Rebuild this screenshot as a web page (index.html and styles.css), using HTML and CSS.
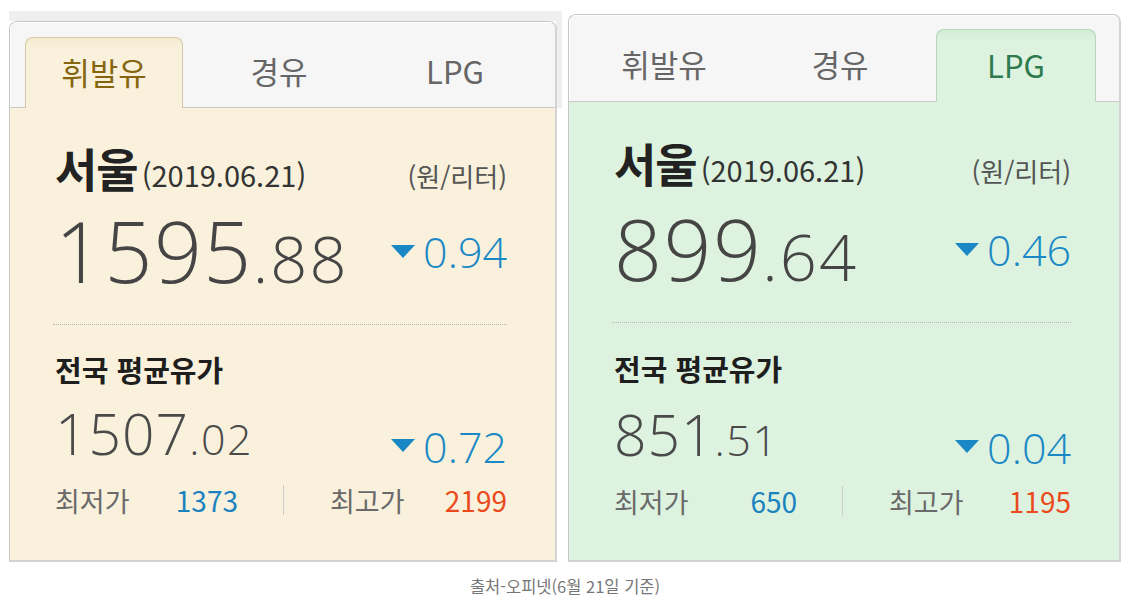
FILE: index.html
```html
<!DOCTYPE html>
<html lang="ko">
<head>
<meta charset="utf-8">
<title>유가 정보</title>
<link rel="stylesheet" href="styles.css">
</head>
<body>
<div class="page">
  <div class="shots">
    <div class="shot shot-gas">
      <div class="panel panel-gas">
        <div class="tabs">
          <div class="tab active">휘발유</div>
          <div class="tab">경유</div>
          <div class="tab">LPG</div>
        </div>
        <div class="content">
          <div class="head">
            <span class="city">서울</span><span class="date">(2019.06.21)</span>
            <span class="unit">(원/리터)</span>
          </div>
          <div class="main-row">
            <span class="price"><span class="int">1595</span><span class="dec">.88</span></span>
            <span class="change"><span class="tri"></span>0.94</span>
          </div>
          <div class="divider"></div>
          <div class="sub-title">전국 평균유가</div>
          <div class="avg-row">
            <span class="price"><span class="int">1507</span><span class="dec">.02</span></span>
            <span class="change"><span class="tri"></span>0.72</span>
          </div>
          <div class="range">
            <div class="half"><span class="lbl">최저가</span><span class="low">1373</span></div>
            <span class="sep"></span>
            <div class="half half-hi"><span class="lbl">최고가</span><span class="high">2199</span></div>
          </div>
        </div>
      </div>
    </div>
    <div class="shot shot-lpg">
      <div class="panel panel-lpg">
        <div class="tabs">
          <div class="tab">휘발유</div>
          <div class="tab">경유</div>
          <div class="tab active">LPG</div>
        </div>
        <div class="content">
          <div class="head">
            <span class="city">서울</span><span class="date">(2019.06.21)</span>
            <span class="unit">(원/리터)</span>
          </div>
          <div class="main-row">
            <span class="price"><span class="int">899</span><span class="dec">.64</span></span>
            <span class="change"><span class="tri"></span>0.46</span>
          </div>
          <div class="divider"></div>
          <div class="sub-title">전국 평균유가</div>
          <div class="avg-row">
            <span class="price"><span class="int">851</span><span class="dec">.51</span></span>
            <span class="change"><span class="tri"></span>0.04</span>
          </div>
          <div class="range">
            <div class="half"><span class="lbl">최저가</span><span class="low">650</span></div>
            <span class="sep"></span>
            <div class="half half-hi"><span class="lbl">최고가</span><span class="high">1195</span></div>
          </div>
        </div>
      </div>
    </div>
  </div>
  <p class="caption">출처-오피넷(6월 21일 기준)</p>
</div>
</body>
</html>
```

FILE: styles.css
```css
* { box-sizing: border-box; }

body {
  margin: 0;
  background: #fff;
  font-family: "Noto Sans CJK KR", "Noto Sans", sans-serif;
  color: #444;
}

.page {
  padding-top: 11px;
}

.shots {
  display: flex;
  align-items: flex-start;
  gap: 6px;
  padding-left: 9px;
}

.shot-gas {
  width: 553px;
  height: 551px;
  padding-top: 10px;
  background:
    linear-gradient(#efefef, #efefef) top left / 100% 10px no-repeat,
    linear-gradient(#efefef, #efefef) top right / 6px 97px no-repeat;
}

.shot-lpg {
  width: 553px;
  height: 548px;
  margin-top: 3px;
}

.panel {
  display: flex;
  flex-direction: column;
  border: 1px solid #c6c6c6;
  border-right: 2px solid #d3d3d3;
  border-bottom: 2px solid #d3d3d3;
  border-radius: 8px 8px 0 0;
  overflow: hidden;
}

.panel-gas {
  width: 548px;
  height: 541px;
  background: #f9f1dc;
}

.panel-lpg {
  width: 553px;
  height: 548px;
  background: #ddf3df;
}

/* tabs */
.tabs {
  display: flex;
  align-items: flex-start;
  gap: 16px;
  height: 86px;
  padding: 15px 0 0 15px;
  background: #f6f6f6;
  border-bottom: 1px solid #c9c9c9;
  box-shadow: inset 0 1px 0 #fff, inset 1px 0 0 #fff;
}

.panel-lpg .tabs {
  height: 87px;
  padding-top: 14px;
}

.tab {
  width: 160px;
  height: 71px;
  display: flex;
  align-items: center;
  justify-content: center;
  padding-bottom: 4px;
  font-size: 31px;
  color: #666;
}

.panel-lpg .tab {
  height: 73px;
}

.tab.active {
  border: 1px solid #d4c9a4;
  border-bottom: none;
  border-radius: 8px 8px 0 0;
}

.panel-gas .tab.active {
  width: 158px;
  background: linear-gradient(#f4ebcf, #f9f1dc 12px);
  color: #86650f;
}

.panel-lpg .tab.active {
  border-color: #b8d6bd;
  background: linear-gradient(#d4edd7, #ddf3df 12px);
  color: #2f7a4e;
}

/* content */
.content {
  flex: 1;
  padding: 36px 48px 0 45px;
}

.panel-lpg .content {
  padding-top: 37px;
}

.head {
  display: flex;
  align-items: baseline;
  height: 50px;
  line-height: 50px;
}

.city {
  font-size: 46px;
  font-weight: 700;
  line-height: 1;
  color: #222;
  letter-spacing: -1px;
}

.date {
  font-size: 29px;
  line-height: 1;
  color: #333;
  margin-left: 4px;
}

.unit {
  margin-left: auto;
  font-size: 26px;
  line-height: 1;
  color: #555;
}

.main-row,
.avg-row {
  display: flex;
  justify-content: space-between;
  align-items: flex-start;
  font-family: "Open Sans", "Noto Sans", sans-serif;
  font-weight: 300;
  line-height: 1;
}

.main-row {
  height: 84px;
  margin-top: 15px;
}

.panel-lpg .main-row {
  margin-top: 18px;
}

.main-row .int {
  font-size: 84px;
  color: #454545;
  letter-spacing: 1.5px;
}

.main-row .dec {
  font-size: 65px;
  color: #454545;
  letter-spacing: 2px;
}

.change {
  font-size: 43px;
  color: #1b88c6;
  margin-top: 21px;
}

.tri {
  display: inline-block;
  width: 0;
  height: 0;
  border-left: 12px solid transparent;
  border-right: 12px solid transparent;
  border-top: 13px solid #1b88c6;
  margin-right: 8px;
  vertical-align: 10px;
}

.divider {
  margin-top: 31px;
  margin-left: -2px;
  border-top: 1px dotted #b3b3b3;
}

.sub-title {
  margin-top: 26px;
  font-size: 29px;
  font-weight: 700;
  line-height: 36px;
  color: #1e1e1e;
}

.panel-lpg .sub-title {
  margin-top: 27px;
}

.avg-row {
  height: 56px;
  margin-top: 18px;
}

.panel-lpg .avg-row {
  margin-top: 20px;
}

.avg-row .int {
  font-size: 57px;
  color: #4a4a4a;
  letter-spacing: 1px;
}

.avg-row .dec {
  font-size: 43px;
  color: #4a4a4a;
  letter-spacing: 1.5px;
}

.avg-row .change {
  margin-top: 20px;
}

.avg-row .tri {
  vertical-align: 11px;
}

.range {
  display: flex;
  align-items: center;
  height: 34px;
  margin-top: 22px;
  line-height: 34px;
}

.half {
  display: flex;
  justify-content: space-between;
  align-items: baseline;
  width: 183px;
}

.half-hi {
  flex: 1;
}

.sep {
  width: 1px;
  height: 30px;
  margin: 0 46px 0 45px;
  background: #cdcdcd;
}

.lbl {
  font-size: 27px;
  color: #6a6a6a;
}

.low,
.high {
  font-size: 28px;
  font-weight: 400;
}

.low { color: #1b82c0; }
.high { color: #ea4a1c; }

.caption {
  margin: 12px 0 0;
  text-align: center;
  font-size: 16.5px;
  line-height: 24px;
  color: #777;
}
```
